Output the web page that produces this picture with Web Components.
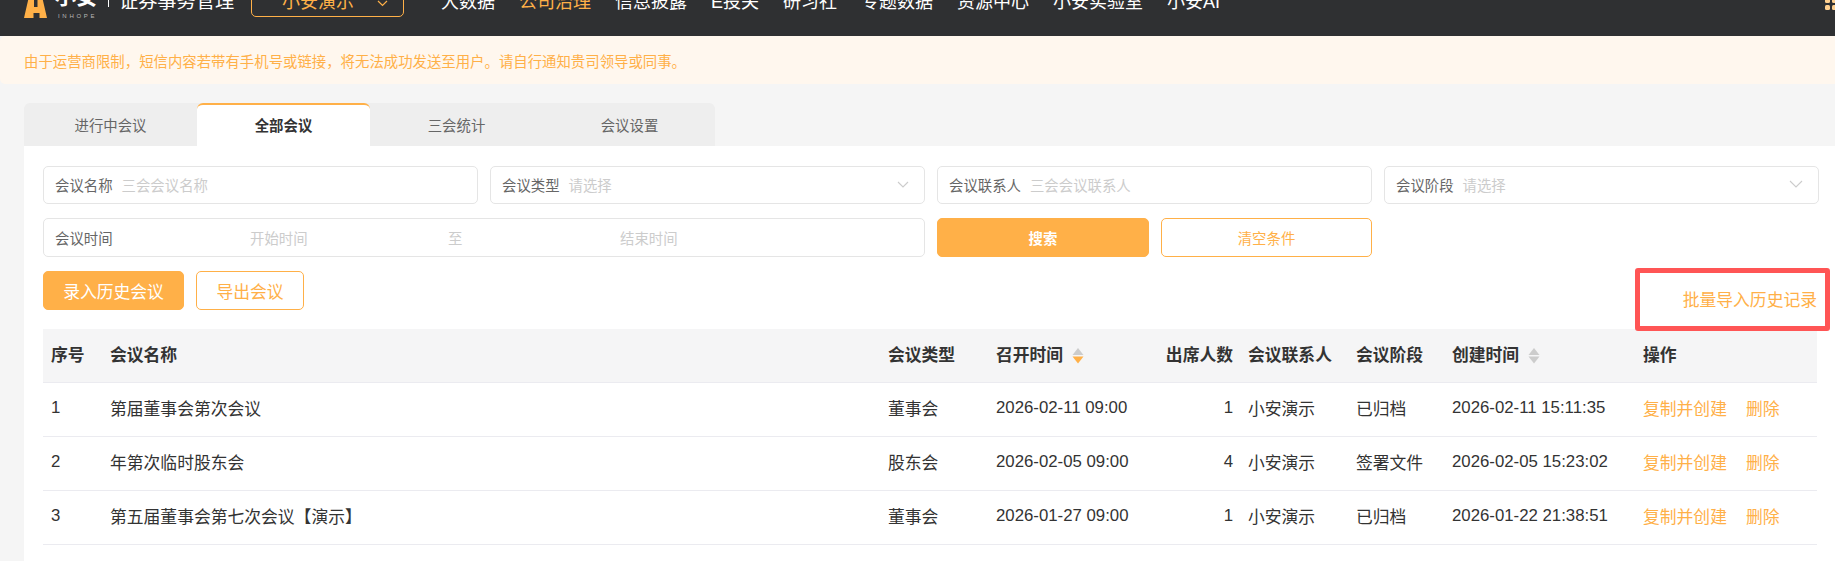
<!DOCTYPE html>
<html lang="zh"><head><meta charset="utf-8"><style>
html,body{margin:0;padding:0;height:561px;overflow:hidden;background:#f5f5f5;font-family:"Liberation Sans","Noto Sans CJK SC",sans-serif;}
app-page{display:block}
</style></head><body>
<app-page></app-page>
<script>
const ORANGE='#ffb048';
function def(name,html){customElements.define(name,class extends HTMLElement{connectedCallback(){if(this.shadowRoot)return;const r=this.attachShadow({mode:'open'});r.innerHTML=typeof html==='function'?html(this):html;}});}

def('top-nav',`<style>
:host{display:block;height:36px;background:#2f3032;overflow:hidden;color:#fff}
.row{display:flex;align-items:center;height:72px;margin-top:-36px;padding-left:24px;box-sizing:border-box;white-space:nowrap}
.logo{display:flex;align-items:center;width:84px;flex:none}
.logo svg{margin-top:9px;flex:none}
.txt{display:flex;flex-direction:column;margin:4px 0 0 8px}
.cn{font-size:21px;line-height:21px;font-weight:700;white-space:nowrap}
.en{font-size:6px;line-height:6px;letter-spacing:2.7px;color:#b8b8b8;margin-top:6px;padding-left:3px}
.sub{flex:none;width:143px;box-sizing:border-box;padding-left:11px;font-size:19.2px;position:relative}
.sub::before{content:"";position:absolute;left:0;top:50%;margin-top:-15px;height:22px;width:1px;background:#fff}
.com{flex:none;box-sizing:border-box;width:153px;height:34px;border:1px solid ${ORANGE};border-radius:5px;display:flex;align-items:center;justify-content:space-between;color:${ORANGE};font-size:18px;padding:0 15px 0 30px}
.com svg{margin-top:6px}
nav{display:flex;gap:24px;margin-left:37px;font-size:18px}
nav .on{color:${ORANGE}}
.dots{margin-left:auto;margin-right:-9px;display:grid;grid-template-columns:repeat(3,5px);gap:2px;flex:none}
.dots i{width:5px;height:5px;border-radius:1.5px;background:#ffd08f}
</style><div class="row">
<div class="logo"><svg width="23" height="26" viewBox="0 0 23 26"><path fill="${ORANGE}" fill-rule="evenodd" d="M6 0h11l6 26h-7.500v-5h-6v5H0zM10 5v10h3.500V5z"/></svg><div class="txt"><span class="cn">小安</span><span class="en">INHOPE</span></div></div>
<div class="sub">证券事务管理</div>
<div class="com">小安演示<svg width="11" height="7" viewBox="0 0 11 7"><path d="M1 1l4.500 4.500L10 1" fill="none" stroke="${ORANGE}" stroke-width="1.200"/></svg></div>
<nav><span>大数据</span><span class="on">公司治理</span><span>信息披露</span><span>E投关</span><span>研习社</span><span>专题数据</span><span>资源中心</span><span>小安实验室</span><span>小安AI</span></nav>
<div class="dots"><i></i><i></i><i></i><i></i><i></i><i></i><i></i><i></i><i></i></div>
</div>`);

def('notice-bar',`<style>:host{display:flex;align-items:center;height:48px;background:#fff7ee;color:${ORANGE};font-size:14.4px;padding-left:24px;border-radius:5px 0 0 5px;white-space:nowrap}</style><slot></slot>`);

def('tab-bar',`<style>:host{display:flex;height:43px;width:691px;background:#eee;border-radius:6px 6px 0 0;margin-left:24px;font-size:14.4px;color:#666}</style><slot></slot>`);
def('tab-item',`<style>:host{display:flex;flex:0 0 173px;align-items:center;justify-content:center;box-sizing:border-box;height:43px;white-space:nowrap}
:host([active]){background:#fff;border-top:2px solid ${ORANGE};border-radius:6px 6px 0 0;font-weight:700;color:#333;padding-bottom:2px}</style><slot></slot>`);

def('filter-field',(h)=>{const big=h.getAttribute('sel')==='big';return `<style>:host{display:flex;align-items:center;justify-content:flex-start;box-sizing:border-box;height:38px;border:1px solid #e5e5e5;border-radius:5px;padding:0 15px 2px 11px;font-size:14.4px;color:#666;background:#fff;white-space:nowrap}
.p{color:#ccc;margin-left:9px;flex:1}
svg{flex:none;margin-top:0}</style><span>${h.getAttribute('label')}</span><span class="p">${h.getAttribute('ph')}</span>${h.hasAttribute('sel')?`<svg width="${big?14:12}" height="${big?8:7}" viewBox="0 0 ${big?14:12} ${big?8:7}"><path d="M1 1l${big?6:5} ${big?6:5} ${big?6:5} -${big?6:5}" fill="none" stroke="#ccc" stroke-width="1.100"/></svg>`:''}`;});

def('date-field',`<style>:host{display:grid;grid-template-columns:195px 198px 172px 1fr;align-items:center;box-sizing:border-box;height:39px;border:1px solid #e5e5e5;border-radius:5px;padding-left:11px;font-size:14.4px;color:#ccc;grid-column:span 2;white-space:nowrap}
.l{color:#666}</style><span class="l">会议时间</span><span>开始时间</span><span>至</span><span>结束时间</span>`);

def('ui-btn',`<style>:host{display:inline-flex;align-items:center;justify-content:center;box-sizing:border-box;border:1px solid ${ORANGE};border-radius:5px;color:${ORANGE};background:#fff;font-size:var(--fs,14.4px);height:39px;white-space:nowrap;flex:none}
:host([solid]){background:${ORANGE};color:#fff}
:host([bold]){font-weight:700}</style><slot></slot>`);

def('data-table',`<style>:host{display:block;font-size:16.8px;color:#333;margin-right:2px}</style><slot></slot>`);
def('table-row',`<style>:host{display:grid;grid-template-columns:59px 778px 108px 168px 84px 108px 96px 191px 1fr;align-items:center;height:54px;border-bottom:1px solid #ebebf0;box-sizing:border-box;white-space:nowrap}
:host([head]){background:#f5f5f6;font-weight:700}</style><slot></slot>`);
def('table-cell',`<style>:host{display:flex;align-items:center;padding:0 0 4px 8px;min-width:0;white-space:nowrap}
:host([right]){justify-content:flex-end;padding:0 7px 4px 0}
:host([link]){color:${ORANGE};gap:19px}
</style><slot></slot>`);
def('sort-arrows',(h)=>`<style>:host{display:inline-block;margin:4px 0 0 9px;width:12px;height:16px;line-height:0;flex:none}</style><svg width="12" height="16" viewBox="0 0 12 16"><path d="M6 0l5.500 7H.5z" fill="#ccc"/><path d="M6 15.500L.5 8.500h11z" fill="${h.hasAttribute('down')?'#ffb048':'#ccc'}"/></svg>`);

const rows=[
['1','第届董事会第次会议','董事会','2026-02-11 09:00','1','小安演示','已归档','2026-02-11 15:11:35'],
['2','年第次临时股东会','股东会','2026-02-05 09:00','4','小安演示','签署文件','2026-02-05 15:23:02'],
['3','第五届董事会第七次会议【演示】','董事会','2026-01-27 09:00','1','小安演示','已归档','2026-01-22 21:38:51']];
const rowHtml=rows.map(r=>`<table-row><table-cell>${r[0]}</table-cell><table-cell>${r[1]}</table-cell><table-cell>${r[2]}</table-cell><table-cell>${r[3]}</table-cell><table-cell right>${r[4]}</table-cell><table-cell>${r[5]}</table-cell><table-cell>${r[6]}</table-cell><table-cell>${r[7]}</table-cell><table-cell link><span>复制并创建</span><span>删除</span></table-cell></table-row>`).join('');

def('app-page',`<style>:host{display:block;height:561px;overflow:hidden}
.tabs{padding-top:19px}
.card{background:#fff;margin-left:24px;padding:20px 16px 0 19px;height:415px;box-sizing:border-box;overflow:hidden}
.filters{display:grid;grid-template-columns:435px 435px 435px 435px;gap:14px 12px}
.btns{display:flex;gap:12px}
.act{display:flex;justify-content:space-between;position:relative;margin-top:14px;height:58px;--fs:16.8px}
.left{display:flex;gap:12px;align-items:flex-start}
.imp{position:absolute;right:-11px;top:-3px;box-sizing:border-box;width:195px;height:63px;border:5px solid #ff5555;border-radius:3px;display:flex;align-items:center;justify-content:flex-end;padding:0 8px 2px 0;color:${ORANGE};font-size:16.8px;white-space:nowrap;z-index:1}
</style>
<top-nav></top-nav>
<notice-bar>由于运营商限制，短信内容若带有手机号或链接，将无法成功发送至用户。请自行通知贵司领导或同事。</notice-bar>
<div class="tabs"><tab-bar><tab-item>进行中会议</tab-item><tab-item active>全部会议</tab-item><tab-item>三会统计</tab-item><tab-item>会议设置</tab-item></tab-bar></div>
<div class="card">
<div class="filters">
<filter-field label="会议名称" ph="三会会议名称"></filter-field>
<filter-field label="会议类型" ph="请选择" sel></filter-field>
<filter-field label="会议联系人" ph="三会会议联系人"></filter-field>
<filter-field label="会议阶段" ph="请选择" sel="big"></filter-field>
<date-field></date-field>
<div class="btns"><ui-btn solid bold style="width:212px">搜索</ui-btn><ui-btn style="width:211px">清空条件</ui-btn></div>
</div>
<div class="act"><div class="left"><ui-btn solid style="width:141px">录入历史会议</ui-btn><ui-btn style="width:108px">导出会议</ui-btn></div><div class="imp">批量导入历史记录</div></div>
<data-table>
<table-row head><table-cell>序号</table-cell><table-cell>会议名称</table-cell><table-cell>会议类型</table-cell><table-cell>召开时间<sort-arrows down></sort-arrows></table-cell><table-cell right>出席人数</table-cell><table-cell>会议联系人</table-cell><table-cell>会议阶段</table-cell><table-cell>创建时间<sort-arrows></sort-arrows></table-cell><table-cell>操作</table-cell></table-row>
${rowHtml}
<table-row><span></span><table-cell>第五届董事会第六次会议</table-cell></table-row>
</data-table>
</div>`);
</script>
</body></html>
